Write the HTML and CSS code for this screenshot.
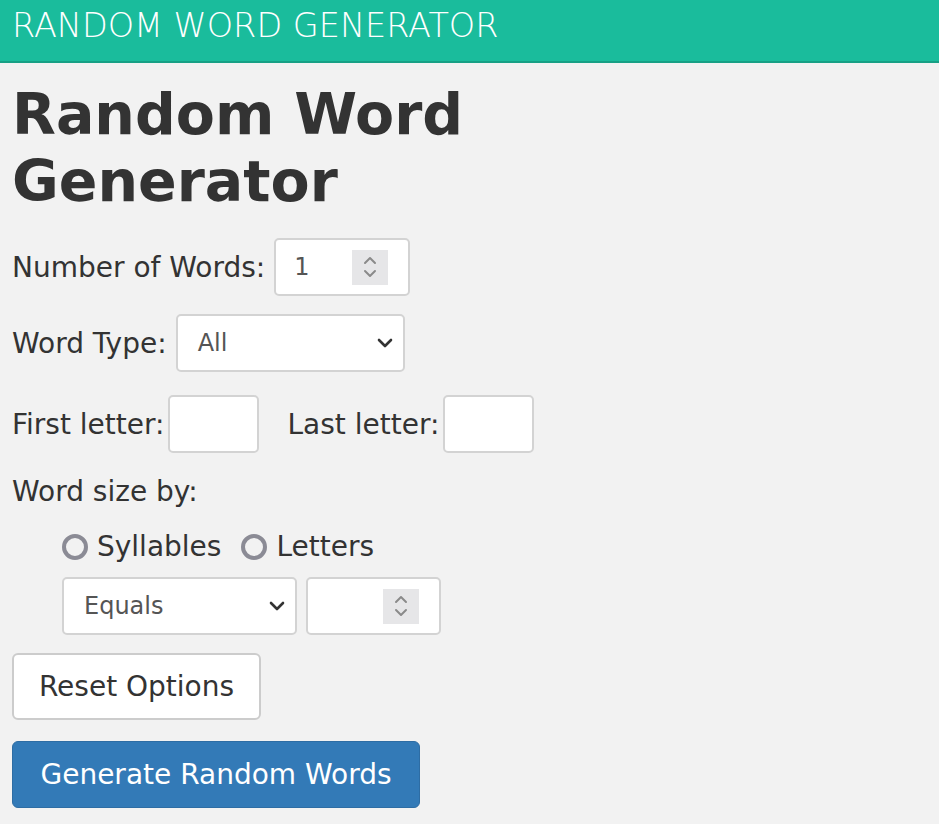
FILE: index.html
```html
<!DOCTYPE html>
<html>
<head>
<meta charset="utf-8">
<link rel="stylesheet" href="styles.css">
</head>
<body>
<header class="topbar">RANDOM WORD GENERATOR</header>
<main class="content">
  <h1 class="title">Random Word Generator</h1>

  <div class="row row-num">
    <span class="label">Number of Words:</span>
    <div class="field num num-words">
      <span class="val">1</span>
      <span class="spin"><svg width="16" height="26" viewBox="0 0 16 26"><path d="M3 9 L8 4 L13 9 M3 17 L8 22 L13 17" fill="none" stroke="#8a8a8a" stroke-width="2" stroke-linecap="round" stroke-linejoin="round"/></svg></span>
    </div>
  </div>

  <div class="row row-type">
    <span class="label">Word Type:</span>
    <div class="field select type-select">
      <span class="val">All</span>
      <svg class="chev" width="16" height="10" viewBox="0 0 16 10"><path d="M2 2 L8 8 L14 2" fill="none" stroke="#333" stroke-width="2.6" stroke-linecap="round" stroke-linejoin="round"/></svg>
    </div>
  </div>

  <div class="row row-letters">
    <span class="label">First letter:</span>
    <div class="field letter"></div>
    <span class="label last-label">Last letter:</span>
    <div class="field letter"></div>
  </div>

  <div class="size-label">Word size by:</div>

  <div class="sub">
    <div class="radios">
      <label class="radio"><span class="dot"></span>Syllables</label>
      <label class="radio"><span class="dot"></span>Letters</label>
    </div>
    <div class="row row-size">
      <div class="field select eq-select">
        <span class="val">Equals</span>
        <svg class="chev" width="16" height="10" viewBox="0 0 16 10"><path d="M2 2 L8 8 L14 2" fill="none" stroke="#333" stroke-width="2.6" stroke-linecap="round" stroke-linejoin="round"/></svg>
      </div>
      <div class="field num size-num">
        <span class="val"></span>
        <span class="spin"><svg width="16" height="26" viewBox="0 0 16 26"><path d="M3 9 L8 4 L13 9 M3 17 L8 22 L13 17" fill="none" stroke="#8a8a8a" stroke-width="2" stroke-linecap="round" stroke-linejoin="round"/></svg></span>
      </div>
    </div>
  </div>

  <div class="buttons">
    <button class="btn reset">Reset Options</button>
    <button class="btn generate">Generate Random Words</button>
  </div>
</main>
</body>
</html>
```

FILE: styles.css
```css
html, body {
  margin: 0;
  padding: 0;
}
body {
  background: #f2f2f2;
  color: #333;
  font-family: "DejaVu Sans", sans-serif;
  font-size: 28px;
}
.topbar {
  box-sizing: border-box;
  height: 63px;
  background: #1abc9c;
  border-bottom: 2px solid #17a085;
  color: #fff;
  font-size: 33.5px;
  font-weight: 200;
  line-height: 52px;
  padding-left: 12px;
}
.content {
  padding: 0 12px;
}
.title {
  margin: 18px 0 0;
  max-width: 480px;
  font-size: 57px;
  font-weight: bold;
  line-height: 67px;
  color: #333;
}
.row {
  display: flex;
  align-items: center;
}
.label {
  margin-right: 9px;
}
.field {
  box-sizing: border-box;
  height: 58px;
  background: #fff;
  border: 2px solid #d3d3d3;
  border-radius: 5px;
  display: flex;
  align-items: center;
  color: #555;
  font-size: 24px;
}
.row-num {
  margin-top: 23px;
}
.num-words {
  width: 136px;
  padding: 0 20px 0 18px;
  justify-content: space-between;
}
.spin {
  width: 36px;
  height: 35px;
  background: #e6e6e8;
  display: flex;
  align-items: center;
  justify-content: center;
}
.row-type {
  margin-top: 18px;
}
.type-select {
  width: 229px;
  padding: 0 10px 0 20px;
  justify-content: space-between;
}
.row-letters {
  margin-top: 23px;
}
.letter {
  width: 91px;
}
.row-letters .label {
  margin-right: 4px;
}
.last-label {
  margin-left: 28px;
}
.size-label {
  margin-top: 21px;
  line-height: 36px;
}
.sub {
  padding-left: 50px;
}
.radios {
  display: flex;
  margin-top: 20px;
  line-height: 34px;
}
.radio {
  display: flex;
  align-items: center;
  margin-right: 20px;
}
.dot {
  box-sizing: border-box;
  width: 26px;
  height: 26px;
  border: 4px solid #8b8b95;
  border-radius: 50%;
  background: #f2f2f2;
  margin-right: 9px;
}
.row-size {
  margin-top: 13px;
  gap: 9px;
}
.eq-select {
  width: 235px;
  padding: 0 10px 0 20px;
  justify-content: space-between;
}
.size-num {
  width: 135px;
  padding: 0 20px 0 18px;
  justify-content: space-between;
}
.buttons {
  display: flex;
  flex-direction: column;
  align-items: flex-start;
  gap: 21px;
  margin-top: 18px;
}
.btn {
  box-sizing: border-box;
  height: 67px;
  font-family: "DejaVu Sans", sans-serif;
  font-size: 28px;
  border-radius: 6px;
  padding: 0 20px;
}
.reset {
  width: 249px;
  background: #fff;
  color: #333;
  border: 2px solid #ccc;
}
.generate {
  width: 408px;
  background: #337ab7;
  color: #fff;
  border: 1px solid #2e6da4;
}
```
